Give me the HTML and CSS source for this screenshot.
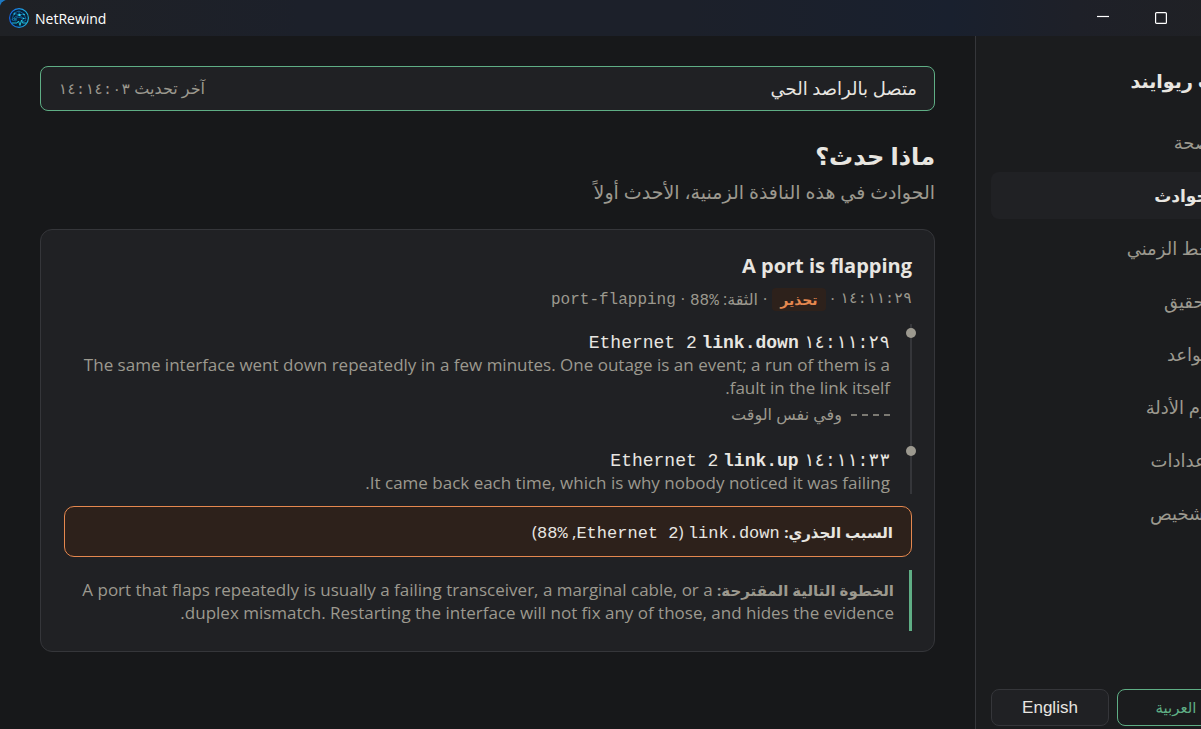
FILE: index.html
```html
<!DOCTYPE html>
<html lang="ar">
<head>
<meta charset="utf-8">
<title>NetRewind</title>
<link rel="stylesheet" href="styles.css">
</head>
<body>
<div class="window">
  <header class="titlebar">
    <svg class="logo" viewBox="0 0 20 20" aria-hidden="true">
      <defs>
        <linearGradient id="ring" x1="0" x2="1"><stop offset="0" stop-color="#1668e8"/><stop offset="1" stop-color="#22b5dc"/></linearGradient>
      </defs>
      <circle cx="10" cy="10" r="9.4" fill="#072238" stroke="url(#ring)" stroke-width="1.1"/>
      <g fill="none" stroke="#1478bd" stroke-width=".7">
        <path d="M5 5 10 3l5 3 2 5-3-1-4-3-4 2-3 3 2-7 5 2 5-1"/>
        <path d="M3 12l4 1 1-4 5 1 1 4 3-2M10 3v4"/>
      </g>
      <path d="M3 15h5l1.500-2 1.500 4.500L12.500 12l1 3H17" fill="none" stroke="#24cfe8" stroke-width=".9"/>
      <g fill="#2bd6ee"><circle cx="10.500" cy="7" r="1.200"/><circle cx="5.500" cy="6" r=".8"/><circle cx="15" cy="6.500" r=".8"/><circle cx="6" cy="11" r=".8"/><circle cx="14.500" cy="10.500" r=".8"/></g>
    </svg>
    <span class="app-name">NetRewind</span>
    <div class="window-controls">
      <button class="window-button" type="button" aria-label="Minimize"><svg viewBox="0 0 12 12"><path d="M0 4.500h12"/></svg></button>
      <button class="window-button" type="button" aria-label="Maximize"><svg viewBox="0 0 12 12"><rect x=".6" y=".6" width="10.800" height="10.800" rx="1"/></svg></button>
    </div>
  </header>

  <div class="shell" dir="rtl">
    <aside class="sidebar">
      <div class="brand">نت ريوايند</div>
      <nav class="nav">
        <a class="nav-item" href="#health">الصحة</a>
        <a class="nav-item active" href="#incidents" aria-current="page">الحوادث</a>
        <a class="nav-item" href="#timeline">الخط الزمني</a>
        <a class="nav-item" href="#investigate">التحقيق</a>
        <a class="nav-item" href="#rules">القواعد</a>
        <a class="nav-item" href="#evidence">حزم الأدلة</a>
        <a class="nav-item" href="#settings">الإعدادات</a>
        <a class="nav-item" href="#diagnostics">التشخيص</a>
      </nav>
      <div class="languages">
        <button class="language selected" type="button">العربية</button>
        <button class="language" type="button">English</button>
      </div>
    </aside>

    <main class="main">
      <div class="status">
        <span class="connection">متصل بالراصد الحي</span>
        <span class="updated">آخر تحديث <time class="mono clock">١٤:١٤:٠٣</time></span>
      </div>
      <h1 class="page-title">ماذا حدث؟</h1>
      <p class="subtitle">الحوادث في هذه النافذة الزمنية، الأحدث أولاً</p>

      <article class="card">
        <h2 class="card-title">A port is flapping</h2>
        <div class="meta">
          <time class="mono clock">١٤:١١:٢٩</time><span>·</span><span class="badge">تحذير</span><span>·</span><span>الثقة: <bdi class="mono">88%</bdi></span><span>·</span><bdi class="mono">port-flapping</bdi>
        </div>

        <ol class="chain">
          <li class="event">
            <div class="event-head"><time class="mono">١٤:١١:٢٩</time> <bdi class="mono kind">link.down</bdi> <bdi class="mono">Ethernet 2</bdi></div>
            <p class="event-text">The same interface went down repeatedly in a few minutes. One outage is an event; a run of them is a fault in the link itself.</p>
            <div class="meanwhile"><span class="dashes"></span>وفي نفس الوقت</div>
          </li>
          <li class="event">
            <div class="event-head"><time class="mono">١٤:١١:٣٣</time> <bdi class="mono kind">link.up</bdi> <bdi class="mono">Ethernet 2</bdi></div>
            <p class="event-text">It came back each time, which is why nobody noticed it was failing.</p>
          </li>
        </ol>

        <div class="cause"><strong class="label">السبب الجذري:</strong> <bdi class="mono">link.down</bdi> (<bdi class="mono">Ethernet 2</bdi>, <bdi class="mono">88%</bdi>)</div>
        <p class="next"><strong class="label">الخطوة التالية المقترحة:</strong> A port that flaps repeatedly is usually a failing transceiver, a marginal cable, or a duplex mismatch. Restarting the interface will not fix any of those, and hides the evidence.</p>
      </article>
    </main>
  </div>
</div>
</body>
</html>
```
FILE: styles.css
```css
* { box-sizing: border-box; }

body {
  margin: 0;
  overflow: hidden;
  background: #1d78c1;
  color: #e8e6e1;
  font-family: "Open Sans", "DejaVu Sans", sans-serif;
  font-size: 17px;
  line-height: 23px;
}

h1, h2, p, ol { margin: 0; padding: 0; }
button { font: inherit; color: inherit; }

.window {
  display: flex;
  flex-direction: column;
  width: calc(100% + 50px);
  height: 100vh;
  overflow: hidden;
  border-top-left-radius: 8px;
  background: #17181a;
}

.titlebar {
  display: flex;
  align-items: center;
  height: 36px;
  padding-left: 9px;
  background: linear-gradient(90deg, #1f2125 0%, #1c202a 24%, #1c202a 55%, #19202e 76%, #1e2028 86%, #202124 100%);
  color: #fff;
  font-size: 14px;
}
.logo { width: 20px; height: 20px; margin-right: 6px; }
.window-controls { display: flex; margin-left: auto; padding-right: 61px; }
.window-button {
  display: grid;
  place-items: center;
  width: 58px;
  height: 36px;
  padding: 0;
  border: 0;
  background: none;
}
.window-button svg { width: 12px; height: 12px; fill: none; stroke: #fff; stroke-width: 1.2; }

.shell { display: flex; flex: 1; min-height: 0; }

.sidebar {
  display: flex;
  flex-direction: column;
  flex: none;
  width: 276px;
  padding: 30px 16px 3px 15px;
  border-left: 1px solid #35363a;
  background: #1b1c1e;
}
.brand { padding: 0 10px; font-size: 19px; font-weight: 700; line-height: 30px; }
.nav { display: flex; flex-direction: column; gap: 6px; margin-top: 23px; }
.nav-item {
  padding: 12px 14px;
  border-radius: 8px;
  color: #9c998f;
  font-size: 18px;
  text-decoration: none;
}
.nav-item.active { background: #202124; color: #e8e6e1; font-size: 17px; font-weight: 700; }
.languages { display: flex; gap: 8px; margin-top: auto; }
.language {
  flex: 1;
  height: 37px;
  padding: 0;
  border: 1px solid #35363a;
  border-radius: 8px;
  background: #202124;
  font-family: "Liberation Sans", "DejaVu Sans", sans-serif;
}
.language.selected { border-color: #5fae85; color: #5fae85; background: #1b1c1e; font-size: 15px; }

.main { flex: 1; min-width: 0; padding: 30px 40px; }

.mono { font-family: "Liberation Mono", "DejaVu Sans Mono", monospace; line-height: 1; }

.status {
  display: flex;
  align-items: center;
  justify-content: space-between;
  padding: 10px 17px;
  border: 1px solid #5fae85;
  border-radius: 8px;
  background: #202124;
}
.connection { font-size: 18px; }
.updated { color: #9c998f; font-size: 16px; }
.clock { font-size: 15px; }

.page-title { margin-top: 26px; font-size: 24px; line-height: 38px; }
.subtitle { color: #9c998f; font-size: 19px; line-height: 34px; }

.card {
  margin-top: 20px;
  padding: 22px 22px 20px 23px;
  border: 1px solid #35363a;
  border-radius: 12px;
  background: #202124;
}
.card-title { font-size: 20px; line-height: 28px; }
.meta {
  display: flex;
  align-items: center;
  gap: 5px;
  margin-top: 8px;
  color: #9c998f;
  font-size: 16px;
}
.badge { padding: 0 8px; border-radius: 4px; background: #2d211b; color: #e5884f; font-size: 14px; font-weight: 700; }

.chain { margin-top: 13px; list-style: none; }
.event {
  position: relative;
  padding-right: 22px;
}
.event::before {
  content: "";
  position: absolute;
  top: 0;
  right: 0;
  bottom: 0;
  width: 2px;
  background: #35363a;
}
.event::after {
  content: "";
  position: absolute;
  top: 4px;
  right: -4px;
  width: 10px;
  height: 10px;
  border-radius: 50%;
  background: #9c998f;
}
.event-head { padding-top: 5px; font-size: 18px; line-height: 24px; }
.kind { font-weight: 700; }
.event-text { color: #9c998f; }
.meanwhile {
  display: flex;
  align-items: center;
  gap: 8px;
  padding: 4px 0 16px;
  color: #9c998f;
  font-size: 16px;
}
.dashes {
  width: 40px;
  height: 2px;
  background: repeating-linear-gradient(270deg, #7c7a73 0 6px, transparent 6px 11px);
}

.cause {
  margin-top: 12px;
  padding: 13px 18px;
  border: 1px solid #e5884f;
  border-radius: 10px;
  background: #2d211b;
}
.label { font-size: 15px; line-height: 1; }
.next {
  margin-top: 13px;
  padding: 8px 15px 7px 12px;
  border-right: 3px solid #5fae85;
  color: #9c998f;
}
```
